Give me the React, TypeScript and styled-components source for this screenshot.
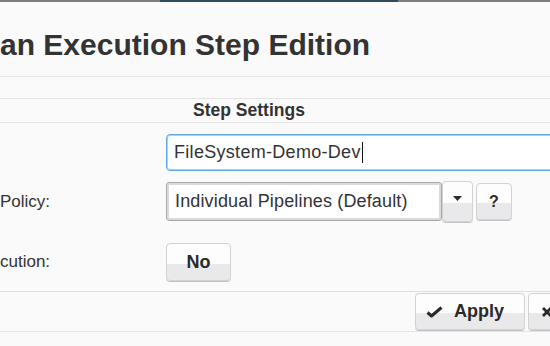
import React from 'react'
import styled, { createGlobalStyle } from 'styled-components'

const GlobalStyle = createGlobalStyle`
  html, body {
    margin: 0;
    padding: 0;
    background: #fafafa;
    overflow: hidden;
  }
  body {
    font-family: 'Liberation Sans', Arial, sans-serif;
    color: #333;
  }
`

const Page = styled.div`
  width: 638px;
`

const TopStrip = styled.div`
  display: flex;
  height: 2px;
`

const StripPart = styled.div<{ $w?: number; $dark?: boolean }>`
  flex: ${(p) => (p.$w ? `0 0 ${p.$w}px` : '1')};
  background: ${(p) => (p.$dark ? '#2f4b59' : '#7d7d7d')};
`

const Header = styled.div`
  padding: 25px 0 13px;
  border-bottom: 1px solid #e4e4e4;
  margin-bottom: 21px;
`

const Title = styled.h1`
  margin: 0;
  font-size: 30px;
  line-height: 36px;
  font-weight: bold;
  white-space: nowrap;
`

const SectionHeader = styled.div`
  border-top: 1px solid #e4e4e4;
  border-bottom: 1px solid #e4e4e4;
`

const SectionTitle = styled.div`
  width: 498px;
  text-align: center;
  font-size: 17.5px;
  line-height: 23px;
  font-weight: bold;
`

const Form = styled.div`
  padding-top: 11px;
`

const Row = styled.div<{ $top?: number }>`
  display: grid;
  grid-template-columns: 166px 1fr;
  align-items: center;
  margin-top: ${(p) => p.$top ?? 0}px;
`

const Label = styled.div`
  font-size: 17px;
  white-space: nowrap;
`

const Controls = styled.div`
  display: flex;
  align-items: center;
`

const Field = styled.div`
  box-sizing: border-box;
  flex: 1;
  height: 37px;
  display: flex;
  align-items: center;
  padding: 0 7px;
  background: #fff;
  border: 1px solid #5ea9e8;
  border-radius: 4px;
  box-shadow: inset 0 0 0 1px #a9d0f3;
  font-size: 18px;
  letter-spacing: 0.3px;
  white-space: nowrap;
`

const Caret = styled.span`
  display: inline-block;
  width: 1px;
  height: 21px;
  margin-left: 1px;
  background: #111;
`

const Select = styled.div`
  box-sizing: border-box;
  width: 276px;
  height: 39px;
  display: flex;
  align-items: center;
  padding: 0 8px;
  background: #fff;
  border: 1px solid #a8a8a8;
  border-radius: 3px;
  box-shadow: inset 0 0 0 2px #dadada;
  font-size: 18px;
  letter-spacing: 0.15px;
  white-space: nowrap;
`

const Button = styled.button<{ $w: number; $h?: number }>`
  box-sizing: border-box;
  width: ${(p) => p.$w}px;
  height: ${(p) => p.$h ?? 37}px;
  display: flex;
  align-items: center;
  justify-content: center;
  gap: 11px;
  padding: 0;
  flex-shrink: 0;
  border: 1px solid #d2d2d2;
  border-radius: 4px;
  box-shadow: 0 1px 0 #c4c4c4;
  background: linear-gradient(#fdfdfd 0, #fdfdfd 55%, #e9e9eb 55%, #e9e9eb 100%);
  font-family: 'Liberation Sans', Arial, sans-serif;
  font-size: 18px;
  font-weight: bold;
  color: #2a2a2a;
  cursor: pointer;
`

const DropButton = styled(Button)`
  align-items: flex-start;
  padding-top: 14px;
`

const HelpButton = styled(Button)`
  margin-left: 3px;
  font-size: 16px;
`

const IconButton = styled(Button)`
  justify-content: flex-start;
  padding-left: 10px;
`

const CloseButton = styled(Button)`
  justify-content: flex-start;
  padding-left: 12px;
`

const Footer = styled.div`
  margin-top: 10px;
  display: flex;
  justify-content: flex-end;
  gap: 3px;
  padding: 1px 0;
  border-top: 1px solid #dedede;
  border-bottom: 1px solid #e4e4e4;
`

const Check = () => (
  <svg width="17" height="12" viewBox="0 0 17 12">
    <path d="M1.5 6.5 L5.5 10 L15.5 1.5" fill="none" stroke="#2a2a2a" strokeWidth="3" strokeLinejoin="round" />
  </svg>
)

const Cross = () => (
  <svg width="12" height="12" viewBox="0 0 12 12">
    <path d="M2 2 L10 10 M10 2 L2 10" fill="none" stroke="#2a2a2a" strokeWidth="2.8" />
  </svg>
)

const Triangle = () => (
  <svg width="9" height="5" viewBox="0 0 9 5">
    <path d="M0 0 H9 L4.5 5 Z" fill="#2a2a2a" />
  </svg>
)

export default function App() {
  return (
    <Page>
      <GlobalStyle />
      <TopStrip>
        <StripPart $w={160} />
        <StripPart $w={238} $dark />
        <StripPart />
      </TopStrip>
      <Header>
        <Title>an Execution Step Edition</Title>
      </Header>
      <SectionHeader>
        <SectionTitle>Step Settings</SectionTitle>
      </SectionHeader>
      <Form>
        <Row>
          <Label />
          <Controls>
            <Field>
              FileSystem-Demo-Dev
              <Caret />
            </Field>
          </Controls>
        </Row>
        <Row $top={10}>
          <Label>Policy:</Label>
          <Controls>
            <Select>Individual Pipelines (Default)</Select>
            <DropButton $w={31} $h={41}>
              <Triangle />
            </DropButton>
            <HelpButton $w={36}>?</HelpButton>
          </Controls>
        </Row>
        <Row $top={21}>
          <Label>cution:</Label>
          <Controls>
            <Button $w={65} $h={38}>No</Button>
          </Controls>
        </Row>
      </Form>
      <Footer>
        <IconButton $w={110}>
          <Check />
          Apply
        </IconButton>
        <CloseButton $w={110} aria-label="Cancel">
          <Cross />
        </CloseButton>
      </Footer>
    </Page>
  )
}
